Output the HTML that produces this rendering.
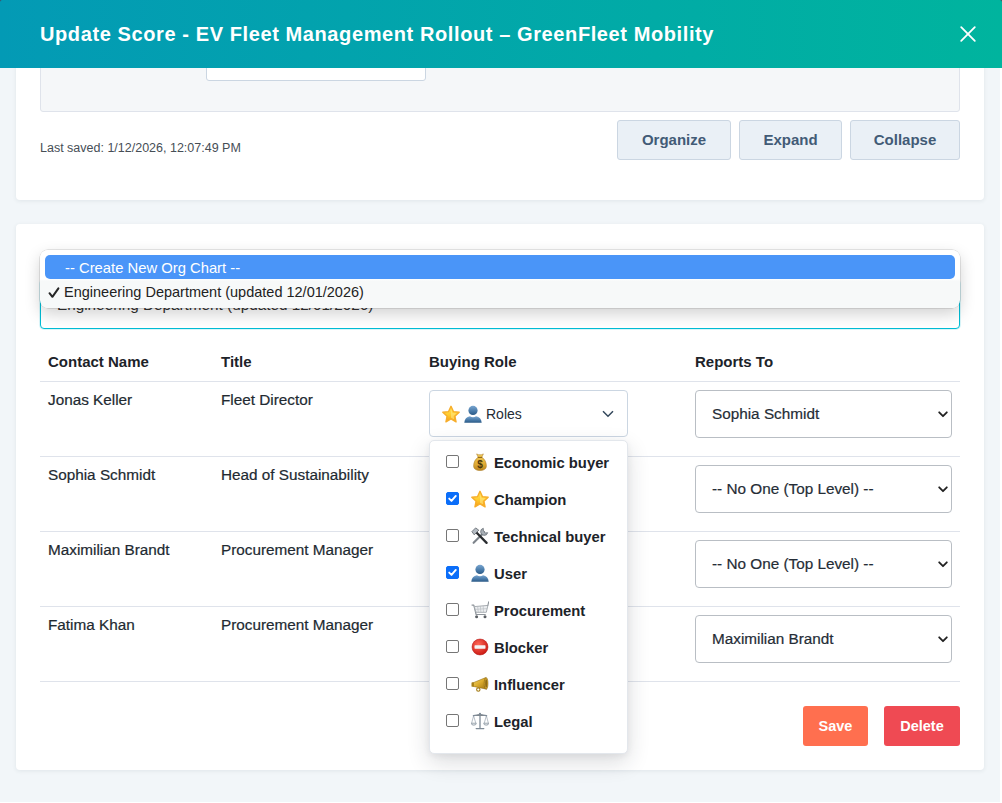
<!DOCTYPE html>
<html><head><meta charset="utf-8">
<style>
*{box-sizing:border-box;margin:0;padding:0}
html,body{width:1002px;height:803px;overflow:hidden;background:#fff;font-family:"Liberation Sans",sans-serif;color:#33475b}
.abs{position:absolute}
#hdr{position:absolute;left:0;top:0;width:1002px;height:68px;background:linear-gradient(90deg,#039ab5 0%,#00b49e 100%);z-index:10;border-radius:2px 2px 0 0}
#hdr h1{position:absolute;left:40px;top:23px;font-size:20px;font-weight:bold;color:#fff;letter-spacing:0.6px;white-space:nowrap}
#close{position:absolute;left:959px;top:25px;width:18px;height:18px}
.card{position:absolute;left:16px;width:968px;background:#fff;border-radius:4px;box-shadow:0 1px 4px rgba(45,62,80,0.09)}
#card1{top:-20px;height:220px}
#panel{position:absolute;left:24px;top:0;width:920px;height:132px;background:#f5f7f9;border:1px solid #dfe3eb;border-radius:3px}
#inp{position:absolute;left:165px;top:-1px;width:220px;height:101px;background:#fff;border:1px solid #cbd6e2;border-radius:3px}
#saved{position:absolute;left:24px;top:161px;font-size:12.5px;color:#464e56}
.btn{position:absolute;top:140px;height:40px;background:#eaf0f6;border:1px solid #cbd6e2;border-radius:3px;color:#425b76;font-weight:bold;font-size:15px;text-align:center;line-height:38px}
#card2{top:224px;height:546px}

.t{position:absolute;white-space:nowrap}
#sel{position:absolute;left:40px;top:280px;width:920px;height:49px;border:1.5px solid #00bcd4;border-radius:4px;background:#fff;box-shadow:0 0 0 1px rgba(0,188,212,0.15)}
#seltxt{position:absolute;left:16px;top:15px;font-size:15.3px;color:#333}
#pop{position:absolute;left:40px;top:250px;width:920px;height:58px;background:linear-gradient(180deg,#fff 0,#fff 29px,#f7f9f9 31px,#f7f9f9 100%);border-radius:8px;box-shadow:0 0 0 0.5px rgba(0,0,0,0.18),0 6px 16px rgba(0,0,0,0.18);z-index:5}
#hl{position:absolute;left:5px;top:5px;width:910px;height:24px;background:#4a95f8;border-radius:5px}
#hltxt{position:absolute;left:20px;top:5px;font-size:14.8px;color:#fff}
#opt2{position:absolute;left:8px;top:34px;font-size:14.5px;color:#222}
.th{position:absolute;top:353px;font-size:15px;font-weight:bold;color:#1d2329}
.hr{position:absolute;left:40px;width:920px;height:1px;background:#dfe3eb}
.td{position:absolute;font-size:15.3px;color:#222a31;-webkit-text-stroke:0.2px #222a31}
.rsel{position:absolute;left:695px;width:257px;height:48px;border:1px solid #b9bec4;border-radius:4px;background:#fff}
.rsel span{position:absolute;left:16px;top:14px;font-size:15.3px;color:#252d36;-webkit-text-stroke:0.2px #252d36}
.rsel svg{position:absolute;left:242px;top:20px}
#roles{position:absolute;left:429px;top:390px;width:199px;height:47px;border:1px solid #cbd6e2;border-radius:4px;background:#fff}
#menu{position:absolute;left:429px;top:440px;width:199px;height:314px;background:#fff;border:1px solid #e3e7ec;border-radius:5px;box-shadow:0 8px 22px rgba(30,40,50,0.16),0 2px 6px rgba(30,40,50,0.06);z-index:4}
.mi{position:absolute;left:0;height:20px;width:198px}
.cb{position:absolute;left:16px;top:-1px;width:13px;height:13px;border:1px solid #767676;border-radius:2px;background:#fff}
.cbc{background:#0b6ef9;border-color:#0b6ef9}
.em{position:absolute;left:41px;top:-3px;width:18px;height:18px}
.ml{position:absolute;left:64px;top:-1px;font-size:14.8px;font-weight:bold;color:#1d2329}
.pb{position:absolute;top:706px;height:40px;border-radius:3px;color:#fff;font-weight:bold;font-size:14.5px;text-align:center;line-height:40px}
</style></head>
<body>
<div style="position:absolute;left:0;top:0;width:1000px;height:802px;background:#f2f6f9"></div>
<div style="position:absolute;left:0;top:0;width:4px;height:4px;background:#4b3f57"></div><div style="position:absolute;left:998px;top:0;width:4px;height:4px;background:#4b3f57"></div>
<div id="hdr"><h1>Update Score - EV Fleet Management Rollout – GreenFleet Mobility</h1>
<svg id="close" viewBox="0 0 18 18"><path d="M2.2 2.2L15.8 15.8M15.8 2.2L2.2 15.8" stroke="#fff" stroke-width="1.8" stroke-linecap="round"/></svg>
</div>
<div class="card" id="card1">
  <div id="panel"><div id="inp"></div></div>
  <div id="saved">Last saved: 1/12/2026, 12:07:49 PM</div>
  <div class="btn" style="left:601px;width:114px">Organize</div>
  <div class="btn" style="left:723px;width:103px">Expand</div>
  <div class="btn" style="left:834px;width:110px">Collapse</div>
</div>
<div class="card" id="card2">
</div>
<svg width="0" height="0" style="position:absolute">
<defs>
<linearGradient id="gstar" x1="0" y1="0" x2="0" y2="1"><stop offset="0" stop-color="#ffe45c"/><stop offset="0.55" stop-color="#ffcc2e"/><stop offset="1" stop-color="#f59a16"/></linearGradient>
<linearGradient id="gbust" x1="0" y1="0" x2="0" y2="1"><stop offset="0" stop-color="#7aa6d0"/><stop offset="0.55" stop-color="#4a7cab"/><stop offset="1" stop-color="#2b5a86"/></linearGradient>
<linearGradient id="gbag" x1="0" y1="0" x2="0" y2="1"><stop offset="0" stop-color="#f4cf5a"/><stop offset="0.6" stop-color="#e0ac36"/><stop offset="1" stop-color="#b98420"/></linearGradient>
<linearGradient id="gmeg" x1="0" y1="0" x2="1" y2="1"><stop offset="0" stop-color="#f7dc6a"/><stop offset="0.5" stop-color="#d9a92c"/><stop offset="1" stop-color="#9a700e"/></linearGradient>
<radialGradient id="gno" cx="0.4" cy="0.35" r="0.7"><stop offset="0" stop-color="#ff6a5a"/><stop offset="1" stop-color="#c8150e"/></radialGradient>
<symbol id="star" viewBox="0 0 18 18"><path d="M9.00 1.30 L11.41 6.58 L17.18 7.24 L12.90 11.17 L14.05 16.86 L9.00 14.00 L3.95 16.86 L5.10 11.17 L0.82 7.24 L6.59 6.58Z" fill="url(#gstar)" stroke="#f7ad2a" stroke-width="1.4" stroke-linejoin="round"/><path d="M9 4.2L10.6 7.9 14.4 8.3 11.6 10.9 12.3 14.6 9 12.7z" fill="#ffe98a" opacity="0.55"/></symbol>
<symbol id="bust" viewBox="0 0 18 18"><circle cx="9" cy="5.4" r="4.6" fill="url(#gbust)"/><path d="M0.3 17.8c0.2-3.9 2.4-6 5.6-6.6 1 .7 2 1 3.1 1s2.1-.3 3.1-1c3.2.6 5.4 2.7 5.6 6.6z" fill="url(#gbust)"/></symbol>
<symbol id="bag" viewBox="0 0 18 18"><path d="M5.6 0.9c1.1.6 2.2.9 3.4.9s2.3-.3 3.4-.9l-1.6 3.4c2.9 1.6 4.6 5.2 4.6 8.5 0 3.3-2.6 4.7-6.4 4.7s-6.4-1.4-6.4-4.7c0-3.3 1.7-6.9 4.6-8.5z" fill="url(#gbag)" stroke="#a8761c" stroke-width="0.5"/><path d="M6.8 4.4h4.4" stroke="#8a5e12" stroke-width="1"/><text x="9" y="15.3" font-size="10" font-weight="bold" text-anchor="middle" fill="#4a3608" font-family="Liberation Sans">$</text></symbol>
<symbol id="tools" viewBox="0 0 18 18"><path d="M13.2 5.2L2.6 15.8" stroke="#7d848b" stroke-width="2.1" stroke-linecap="round"/><path d="M12.3 1.3a3.6 3.6 0 1 0 4.4 4.4l-2.4.2-1.9-1.9z" fill="#a9b0b7" stroke="#5d646b" stroke-width="0.7" stroke-linejoin="round"/><path d="M5.2 5.2L15.6 15.9" stroke="#2a2d30" stroke-width="2.3" stroke-linecap="round"/><path d="M0.9 4.6L4.6 0.9 7.8 3.2 3.2 7.8z" fill="#b5bcc3" stroke="#4d545b" stroke-width="0.7" stroke-linejoin="round"/></symbol>
<symbol id="cart" viewBox="0 0 18 18"><path d="M0.6 4.2h2.2l2.3 9.3h9.6" fill="none" stroke="#8e949a" stroke-width="1.2" stroke-linejoin="round"/><path d="M3.3 5.6l13.6-1.2-1.6 6.9H5z" fill="#eceef0" stroke="#a0a6ac" stroke-width="0.9" stroke-linejoin="round"/><path d="M6.6 5.3l.7 6M9.4 5l.5 6.3M12.2 4.8l.3 6.5M4.1 8.4l12.1-.8" stroke="#b4b9be" stroke-width="0.6"/><path d="M16.9 4.4l.8-3.6" stroke="#8e949a" stroke-width="1.1" stroke-linecap="round"/><circle cx="5.6" cy="15.8" r="1.5" fill="#5a5f64"/><circle cx="14" cy="15.8" r="1.5" fill="#5a5f64"/></symbol>
<symbol id="noent" viewBox="0 0 18 18"><circle cx="9" cy="9" r="8" fill="url(#gno)" stroke="#b01010" stroke-width="0.5"/><rect x="3.5" y="7.3" width="11" height="3.4" rx="0.6" fill="#f4f4f4"/></symbol>
<symbol id="meg" viewBox="0 0 18 18"><path d="M2 7.8L14.6 2.6c1.3 2.5 1.7 7.6 1 11.6L2.2 11.4z" fill="url(#gmeg)" stroke="#8a6410" stroke-width="0.5"/><ellipse cx="15.1" cy="8.4" rx="1.9" ry="5.9" fill="#d9ab32" stroke="#7a5a10" stroke-width="0.5"/><ellipse cx="15.2" cy="8.4" rx="1" ry="4.2" fill="#8f6a14"/><rect x="0.5" y="7.2" width="2.4" height="4.6" rx="0.9" fill="#a67f18"/><circle cx="7.3" cy="14.6" r="1.7" fill="none" stroke="#a67f18" stroke-width="1.1"/></symbol>
<symbol id="scale" viewBox="0 0 18 18"><path d="M9 1.8v14M2.4 3.6l6.6-1 6.6 1M5.2 16.6h7.6" stroke="#7f8b97" stroke-width="1.3" stroke-linecap="round"/><path d="M2.6 3.8L0.6 11.2M2.6 3.8L4.8 11.2M15.4 3.8L13.2 11.2M15.4 3.8L17.4 11.2" stroke="#8a96a2" stroke-width="0.6"/><path d="M.3 11.2h5a2.5 2 0 0 1-5 0zM12.7 11.2h5a2.5 2 0 0 1-5 0z" fill="#e3e8ec" stroke="#7f8b97" stroke-width="0.7"/><circle cx="9" cy="1.9" r="1.1" fill="#7f8b97"/></symbol>
</defs></svg>
<div id="sel"><div id="seltxt" class="t">Engineering Department (updated 12/01/2026)</div></div>
<div id="pop"><div id="hl"><div id="hltxt" class="t">-- Create New Org Chart --</div></div><svg class="abs" style="left:8px;top:37px" width="12" height="12" viewBox="0 0 12 12"><path d="M1.5 6.2L4.4 9.8L10.4 1.4" fill="none" stroke="#262626" stroke-width="2" stroke-linecap="round" stroke-linejoin="round"/></svg><div id="opt2" class="t" style="left:24px">Engineering Department (updated 12/01/2026)</div></div>
<div class="th t" style="left:48px">Contact Name</div>
<div class="th t" style="left:221px">Title</div>
<div class="th t" style="left:429px">Buying Role</div>
<div class="th t" style="left:695px">Reports To</div>
<div class="hr" style="top:381px"></div>
<div class="td t" style="left:48px;top:391px">Jonas Keller</div><div class="td t" style="left:221px;top:391px">Fleet Director</div>
<div class="rsel" style="top:390px"><span>Sophia Schmidt</span><svg width="10" height="7" viewBox="0 0 10 7"><path d="M1.2 1.3L5 5.2l3.8-3.9" fill="none" stroke="#222" stroke-width="1.8" stroke-linecap="round" stroke-linejoin="round"/></svg></div>
<div class="hr" style="top:456px"></div>
<div class="td t" style="left:48px;top:466px">Sophia Schmidt</div><div class="td t" style="left:221px;top:466px">Head of Sustainability</div>
<div class="rsel" style="top:465px"><span>-- No One (Top Level) --</span><svg width="10" height="7" viewBox="0 0 10 7"><path d="M1.2 1.3L5 5.2l3.8-3.9" fill="none" stroke="#222" stroke-width="1.8" stroke-linecap="round" stroke-linejoin="round"/></svg></div>
<div class="hr" style="top:531px"></div>
<div class="td t" style="left:48px;top:541px">Maximilian Brandt</div><div class="td t" style="left:221px;top:541px">Procurement Manager</div>
<div class="rsel" style="top:540px"><span>-- No One (Top Level) --</span><svg width="10" height="7" viewBox="0 0 10 7"><path d="M1.2 1.3L5 5.2l3.8-3.9" fill="none" stroke="#222" stroke-width="1.8" stroke-linecap="round" stroke-linejoin="round"/></svg></div>
<div class="hr" style="top:606px"></div>
<div class="td t" style="left:48px;top:616px">Fatima Khan</div><div class="td t" style="left:221px;top:616px">Procurement Manager</div>
<div class="rsel" style="top:615px"><span>Maximilian Brandt</span><svg width="10" height="7" viewBox="0 0 10 7"><path d="M1.2 1.3L5 5.2l3.8-3.9" fill="none" stroke="#222" stroke-width="1.8" stroke-linecap="round" stroke-linejoin="round"/></svg></div>
<div class="hr" style="top:681px"></div>
<div id="roles"><svg class="abs" style="left:12px;top:14px" width="18" height="18"><use href="#star"/></svg><svg class="abs" style="left:34px;top:14px" width="18" height="18"><use href="#bust"/></svg><div class="t" style="left:56px;top:15px;font-size:14px;color:#252d36">Roles</div>
<svg class="abs" style="left:172px;top:19px" width="12" height="8" viewBox="0 0 12 8"><path d="M1 1.2l5 5 5-5" fill="none" stroke="#33475b" stroke-width="1.5"/></svg></div>
<div id="menu">
<div class="mi" style="top:15px"><div class="cb"></div><svg class="em" viewBox="0 0 18 18"><use href="#bag"/></svg><div class="ml t">Economic buyer</div></div>
<div class="mi" style="top:52px"><div class="cb cbc"><svg width="11" height="11" viewBox="0 0 11 11" style="position:absolute;left:0;top:0"><path d="M2.2 5.6l2.3 2.3 4.3-5" fill="none" stroke="#fff" stroke-width="1.9" stroke-linecap="round" stroke-linejoin="round"/></svg></div><svg class="em" viewBox="0 0 18 18"><use href="#star"/></svg><div class="ml t">Champion</div></div>
<div class="mi" style="top:89px"><div class="cb"></div><svg class="em" viewBox="0 0 18 18"><use href="#tools"/></svg><div class="ml t">Technical buyer</div></div>
<div class="mi" style="top:126px"><div class="cb cbc"><svg width="11" height="11" viewBox="0 0 11 11" style="position:absolute;left:0;top:0"><path d="M2.2 5.6l2.3 2.3 4.3-5" fill="none" stroke="#fff" stroke-width="1.9" stroke-linecap="round" stroke-linejoin="round"/></svg></div><svg class="em" viewBox="0 0 18 18"><use href="#bust"/></svg><div class="ml t">User</div></div>
<div class="mi" style="top:163px"><div class="cb"></div><svg class="em" viewBox="0 0 18 18"><use href="#cart"/></svg><div class="ml t">Procurement</div></div>
<div class="mi" style="top:200px"><div class="cb"></div><svg class="em" viewBox="0 0 18 18"><use href="#noent"/></svg><div class="ml t">Blocker</div></div>
<div class="mi" style="top:237px"><div class="cb"></div><svg class="em" viewBox="0 0 18 18"><use href="#meg"/></svg><div class="ml t">Influencer</div></div>
<div class="mi" style="top:274px"><div class="cb"></div><svg class="em" viewBox="0 0 18 18"><use href="#scale"/></svg><div class="ml t">Legal</div></div>
</div>
<div class="pb" style="left:803px;width:65px;background:#ff6f4f">Save</div>
<div class="pb" style="left:884px;width:76px;background:#ef4a53">Delete</div>

</body></html>
